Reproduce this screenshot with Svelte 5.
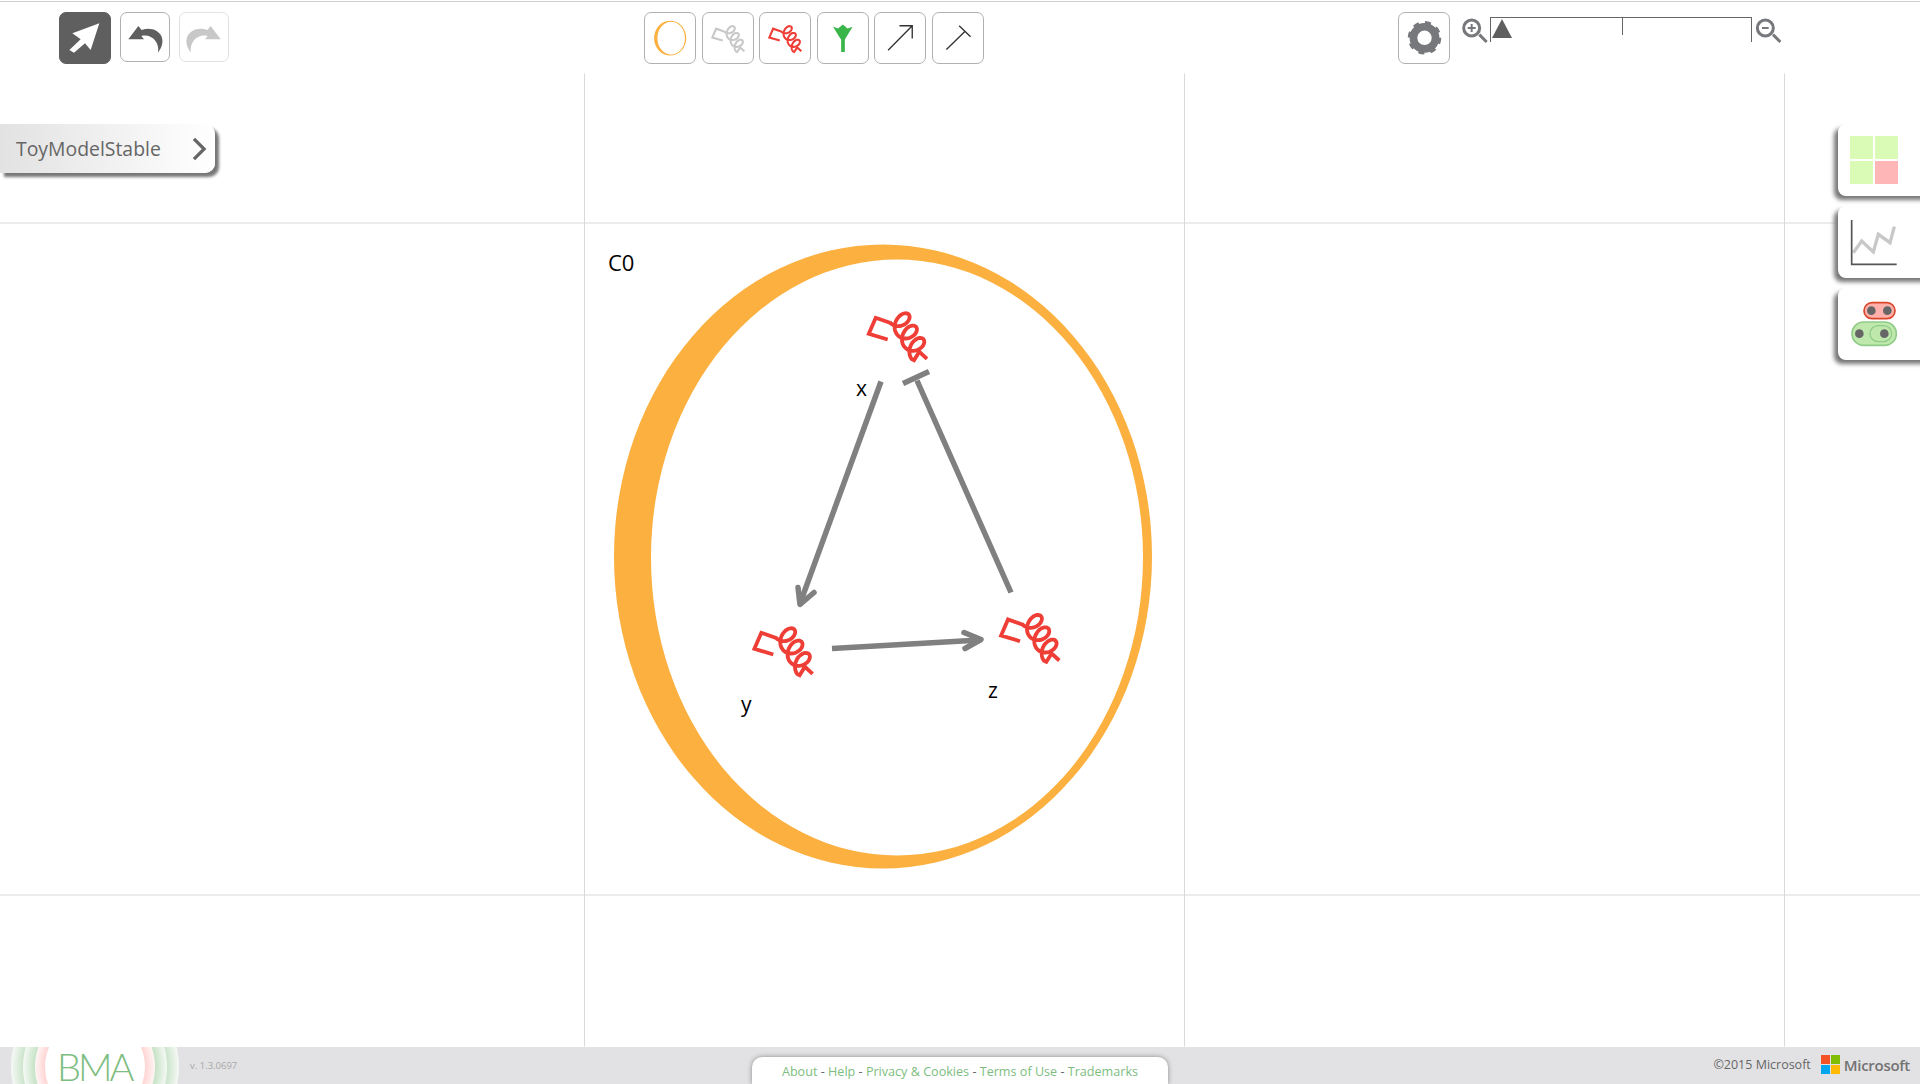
<script>
  // coil is drawn as closed tilted loops joined along the back, coordinates are 3x px of the gene glyph
  function coil() {
    const pts = [];
    const cx0 = 172, cy0 = 77, stepX = 22, stepY = 37;
    const ux = 0.74, uy = -0.67, vx = 0.67, vy = 0.74;
    const a = 31, b = -19, turns = 3;
    for (let i = 0; i <= 150; i++) {
      const s = (i / 150) * turns;
      const p = s + (Math.sin(2 * Math.PI * s) / (2 * Math.PI)) * 0.8;
      const t = Math.PI + s * 2 * Math.PI;
      const x = cx0 + stepX * p + ux * a * Math.cos(t) + vx * b * Math.sin(t);
      const y = cy0 + stepY * p + uy * a * Math.cos(t) + vy * b * Math.sin(t);
      pts.push((x / 3).toFixed(1) + " " + (y / 3).toFixed(1));
    }
    return "M47.7 50 L28.8 44.3 L35.7 28.3 L50 33.3 L" + pts.join(" L") + " L74 70.7 L79.3 62.3 L87 69.3";
  }
  const genePath = coil();

  const links = ["About", "Help", "Privacy & Cookies", "Terms of Use", "Trademarks"];
  const genes = [
    { name: "x", dx: 840, dy: 290, lx: 856, ly: 396 },
    { name: "y", dx: 725.6, dy: 605, lx: 741, ly: 712 },
    { name: "z", dx: 972.3, dy: 591.7, lx: 988, ly: 698 },
  ];
</script>

<div class="page">
  <header class="toolbar">
    <div class="group left">
      <button class="btn dark" aria-label="select">
        <svg viewBox="177 36 156 156"><path d="M298 70 L217 100 L242 118 L208 150 L222 158 L255 130 L272 150Z" fill="#fff" /></svg>
      </button>
      <button class="btn narrow" aria-label="undo">
        <svg viewBox="360 36 150 150"><path class="undo" d="M385 118 L415 78 L425 90 C468 74 510 112 474 158 C480 128 455 100 424 108 L432 118Z" /></svg>
      </button>
      <button class="btn narrow faint" aria-label="redo">
        <svg viewBox="537 36 150 150"><path class="redo" transform="translate(1047 0) scale(-1 1)" d="M385 118 L415 78 L425 90 C468 74 510 112 474 158 C480 128 455 100 424 108 L432 118Z" /></svg>
      </button>
    </div>

    <div class="group tools">
      <button class="btn" aria-label="container">
        <svg viewBox="42 36 155 155"><path fill-rule="evenodd" fill="#fbb040" d="M72 114 a48 52 0 1 0 96 0 a48 52 0 1 0 -96 0Z M82 114 a41 49 0 1 0 82 0 a41 49 0 1 0 -82 0Z" /></svg>
      </button>
      <button class="btn" aria-label="constant">
        <svg viewBox="10 -2 94.5 94.5"><path d={genePath} class="gene" stroke="#c8c8c8" stroke-width="3.8" /></svg>
      </button>
      <button class="btn" aria-label="variable">
        <svg viewBox="10 -2 94.5 94.5"><path d={genePath} class="gene" stroke="#ef3e36" stroke-width="3.8" /></svg>
      </button>
      <button class="btn" aria-label="receptor">
        <svg viewBox="562 36 155 155"><path fill="#39b54a" d="M610 80 L625 85 L639 73 L653 85 L668 80 L650 110 L645 118 V155 H634 V118 L628 110Z" /></svg>
      </button>
      <button class="btn" aria-label="activate">
        <svg viewBox="736 36 155 155"><path class="thin" d="M778 150 L850 77 M812 77 H850 V115" /></svg>
      </button>
      <button class="btn" aria-label="inhibit">
        <svg viewBox="907 36 155 155"><path class="thin" d="M950 148 L1005 94 M988 77 L1022 110" /></svg>
      </button>
    </div>

    <div class="group right">
      <button class="btn" aria-label="settings">
        <svg viewBox="54 36 155 155">
          <circle cx="133" cy="113" r="33" fill="none" stroke="#77787b" stroke-width="23" />
          <circle cx="133" cy="113" r="44" fill="none" stroke="#77787b" stroke-width="12" stroke-dasharray="17 17.55" />
        </svg>
      </button>
      <div class="zoom">
        <svg class="lens" viewBox="243 52 81 81" aria-hidden="true">
          <circle cx="275" cy="85" r="24" class="lens-line" />
          <path class="lens-line" d="M298 105 L320 127" />
          <path class="lens-plus" d="M275 73 V97 M263 85 H287" />
        </svg>
        <div class="track"><span class="thumb"></span><span class="mid"></span></div>
        <svg class="lens" viewBox="1124 52 81 81" aria-hidden="true">
          <circle cx="1155" cy="85" r="24" class="lens-line" />
          <path class="lens-line" d="M1178 105 L1200 127" />
          <path class="lens-plus" d="M1145 85 H1165" />
        </svg>
      </div>
    </div>
  </header>

  <main class="canvas">
    <svg class="drawing" viewBox="0 74 1920 973" aria-label="model">
      <path class="grid" d="M584.5 74 V1047 M1184.5 74 V1047 M1784.5 74 V1047 M0 223.5 H1920 M0 895.5 H1920" />
      <path fill="#fbb040" fill-rule="evenodd" d="M614 557 a269 312 0 1 0 538 0 a269 312 0 1 0 -538 0Z M651 558 a246 298 0 1 0 492 0 a246 298 0 1 0 -492 0Z" />
      <text x="608" y="271" class="label big">C0</text>
      {#each genes as g}
        <path d={genePath} class="gene" stroke="#ef3e36" stroke-width="3.8" transform="translate({g.dx} {g.dy})" />
        <text x={g.lx} y={g.ly} class="label">{g.name}</text>
      {/each}
      <path class="edge" d="M881 382 L800 604" />
      <path class="edge head" d="M798 588 L800 605 L814 593" />
      <path class="edge" d="M832 649 L980 640.500" />
      <path class="edge head" d="M964 633 L981 640 L965 649" />
      <path class="edge" d="M1011 593 L917 381 M903 384 L929 372" />
    </svg>

    <div class="crumb">
      <span>ToyModelStable</span>
      <svg viewBox="0 0 16 26" aria-hidden="true"><path d="M2 2 L13 13 L2 24" /></svg>
    </div>

    <aside class="side">
      <div class="tab">
        <div class="cells"><i></i><i></i><i></i><i class="bad"></i></div>
      </div>
      <div class="tab">
        <svg viewBox="54 290 246 216">
          <path d="M100 430 L125 395 L160 428 L175 375 L210 400 L223 352" fill="none" stroke="#c8c8c8" stroke-width="10" />
          <path d="M95 332 V465 H230" fill="none" stroke="#555" stroke-width="5" />
        </svg>
      </div>
      <div class="tab">
        <svg viewBox="54 535 246 216">
          <rect x="132" y="579" width="93" height="48" rx="24" fill="#ffb0aa" stroke="#d9472b" stroke-width="5" />
          <circle cx="154" cy="603" r="13" fill="#666" />
          <circle cx="202" cy="603" r="13" fill="#666" />
          <rect x="96" y="637" width="133" height="70" rx="35" fill="#bfe8ad" stroke="#90cc88" stroke-width="5" />
          <rect x="150" y="648" width="65" height="48" rx="24" fill="none" stroke="#90cc88" stroke-width="4" />
          <circle cx="118" cy="672" r="13" fill="#666" />
          <circle cx="193" cy="672" r="13" fill="#666" />
        </svg>
      </div>
    </aside>
  </main>

  <footer class="footer">
    <div class="brand">
      <svg class="rings" viewBox="0 0 190 37" aria-hidden="true">
        <defs>
          <radialGradient id="g3"><stop offset="0.87" stop-color="#cfe6cf" /><stop offset="1" stop-color="#f6f9f6" /></radialGradient>
          <radialGradient id="g2"><stop offset="0.85" stop-color="#c9e4c9" /><stop offset="1" stop-color="#f6f9f6" /></radialGradient>
          <radialGradient id="g1"><stop offset="0.82" stop-color="#ffd2d0" /><stop offset="1" stop-color="#fff6f5" /></radialGradient>
        </defs>
        <circle cx="95" cy="20" r="84" fill="url(#g3)" />
        <circle cx="95" cy="20" r="72" fill="url(#g2)" />
        <circle cx="95" cy="20" r="60" fill="url(#g1)" />
        <circle cx="95" cy="20" r="50" fill="#fff" />
      </svg>
      <span class="logo">BMA</span>
      <span class="version">v. 1.3.0697</span>
    </div>

    <nav class="links">
      {#each links as link, i}
        {#if i > 0}<span>{" - "}</span>{/if}<a href="#top">{link}</a>
      {/each}
    </nav>

    <div class="legal">
      <span class="copy">©2015 Microsoft</span>
      <span class="ms"><i class="r"></i><i class="g"></i><i class="b"></i><i class="y"></i></span>
      <span class="word">Microsoft</span>
    </div>
  </footer>
</div>

<style>
  :global(body) {
    margin: 0;
    background: #fff;
    font-family: "Open Sans", "Liberation Sans", sans-serif;
  }

  .page {
    height: 1084px;
    display: flex;
    flex-direction: column;
    overflow: hidden;
  }

  .toolbar {
    height: 72px;
    flex: none;
    box-sizing: border-box;
    margin-top: 1px;
    border-top: 1px solid #cfcfcf;
    padding: 10px 0 0 59px;
    display: flex;
    align-items: flex-start;
    position: relative;
    z-index: 2;
    background: #fff;
  }

  .group {
    display: flex;
    align-items: flex-start;
  }

  .left {
    gap: 9px;
    width: 585px;
  }

  .tools {
    gap: 5.6px;
    width: 754px;
  }

  .right {
    gap: 11px;
  }

  .btn {
    width: 52px;
    height: 52px;
    box-sizing: border-box;
    padding: 0;
    border: 1px solid #b0b0b0;
    border-radius: 7px;
    background: #fff;
    display: block;
  }

  .btn svg {
    display: block;
    width: calc(100% + 2px);
    height: calc(100% + 2px);
    margin: -1px;
  }

  .narrow {
    width: 50px;
    height: 50px;
  }

  .dark {
    background: #5f5f5f;
    border-color: #5f5f5f;
  }

  .faint {
    border-color: #e2e2e2;
  }

  .undo {
    fill: #5f5f5f;
  }

  .redo {
    fill: #c8c8c8;
  }

  .gene {
    fill: none;
    stroke-linejoin: miter;
  }

  .thin {
    fill: none;
    stroke: #333;
    stroke-width: 4;
  }

  .zoom {
    display: flex;
    align-items: flex-start;
    margin-top: 5px;
  }

  .lens {
    width: 27px;
    height: 27px;
    flex: none;
  }

  .lens-line {
    fill: none;
    stroke: #77787b;
    stroke-width: 9;
  }

  .lens-plus {
    fill: none;
    stroke: #77787b;
    stroke-width: 6;
  }

  .track {
    width: 262px;
    height: 25px;
    margin: 0 3px 0 2px;
    box-sizing: border-box;
    border: 1px solid #666;
    border-bottom: none;
    position: relative;
  }

  .mid {
    position: absolute;
    left: 131px;
    top: 0;
    height: 17px;
    border-left: 1px solid #666;
  }

  .thumb {
    position: absolute;
    left: 1px;
    top: 1px;
    border-left: 10px solid transparent;
    border-right: 10px solid transparent;
    border-bottom: 19px solid #5f5f5f;
  }

  .canvas {
    flex: 1;
    position: relative;
    min-height: 0;
  }

  .drawing {
    position: absolute;
    inset: 0;
    width: 100%;
    height: 100%;
    display: block;
  }

  .grid {
    fill: none;
    stroke: #d9d9d9;
    stroke-width: 1;
  }

  .label {
    font-family: "Open Sans", sans-serif;
    font-size: 21px;
    fill: #000;
  }

  .big {
    font-size: 22px;
  }

  .edge {
    fill: none;
    stroke: #808080;
    stroke-width: 5.5;
  }

  .head {
    stroke-linecap: round;
    stroke-linejoin: round;
  }

  .crumb {
    position: absolute;
    left: 0;
    top: 51px;
    width: 215px;
    height: 49px;
    box-sizing: border-box;
    padding: 0 8px 0 16px;
    display: flex;
    align-items: center;
    justify-content: space-between;
    border-radius: 0 10px 10px 0;
    background: linear-gradient(to right, #e2e2e2, #fff);
    box-shadow: 4px 4px 3px #777;
    color: #666;
    font-size: 19.4px;
  }

  .crumb svg {
    width: 15px;
    height: 24px;
  }

  .crumb path {
    fill: none;
    stroke: #666;
    stroke-width: 3.5;
  }

  .side {
    position: absolute;
    right: -10px;
    top: 51px;
    width: 92px;
    display: flex;
    flex-direction: column;
    gap: 10.5px;
  }

  .tab {
    height: 71.5px;
    background: #fff;
    border-radius: 8px 0 0 8px;
    box-shadow: -4px 4px 4px #777;
  }

  .tab svg {
    display: block;
    width: 82px;
    height: 72px;
  }

  .cells {
    display: grid;
    grid-template-columns: 23px 23px;
    grid-auto-rows: 23px;
    gap: 2px;
    padding: 12px 0 0 12px;
  }

  .cells i {
    background: #d9fbb5;
  }

  .cells i.bad {
    background: #ffb6b6;
  }

  .footer {
    height: 37px;
    flex: none;
    background: #e2e2e4;
    display: grid;
    grid-template-columns: 752px 416px 1fr;
    position: relative;
    overflow: hidden;
  }

  .brand {
    position: relative;
  }

  .rings {
    position: absolute;
    left: 0;
    top: 0;
    width: 190px;
    height: 37px;
  }

  .logo {
    position: absolute;
    left: 57px;
    top: 3px;
    font-family: Lato, sans-serif;
    font-weight: 300;
    font-size: 38px;
    letter-spacing: -3px;
    line-height: 33px;
    color: #7dbd80;
  }

  .version {
    position: absolute;
    left: 190px;
    top: 12px;
    font-size: 9.5px;
    line-height: 14px;
    color: #a8a8a8;
  }

  .links {
    margin-top: 10px;
    padding-top: 5px;
    box-sizing: border-box;
    background: #fff;
    border-radius: 10px 10px 0 0;
    box-shadow: 0 0 5px #888;
    text-align: center;
    font-size: 12.6px;
    line-height: 20px;
    color: #666;
    white-space: nowrap;
  }

  .links a {
    color: #7dbd80;
    text-decoration: none;
  }

  .legal {
    display: flex;
    align-items: center;
    justify-content: flex-end;
    padding: 0 10px 2px 0;
    color: #666;
  }

  .copy {
    font-size: 12.5px;
    margin-right: 10px;
  }

  .ms {
    display: grid;
    grid-template-columns: 9px 9px;
    grid-auto-rows: 9px;
    gap: 1px;
    margin-right: 4px;
  }

  .ms .r { background: #f35325; }
  .ms .g { background: #81bc06; }
  .ms .b { background: #05a6f0; }
  .ms .y { background: #ffba08; }

  .word {
    font-size: 15px;
    font-weight: 600;
    letter-spacing: -0.3px;
    color: #737373;
  }
</style>
